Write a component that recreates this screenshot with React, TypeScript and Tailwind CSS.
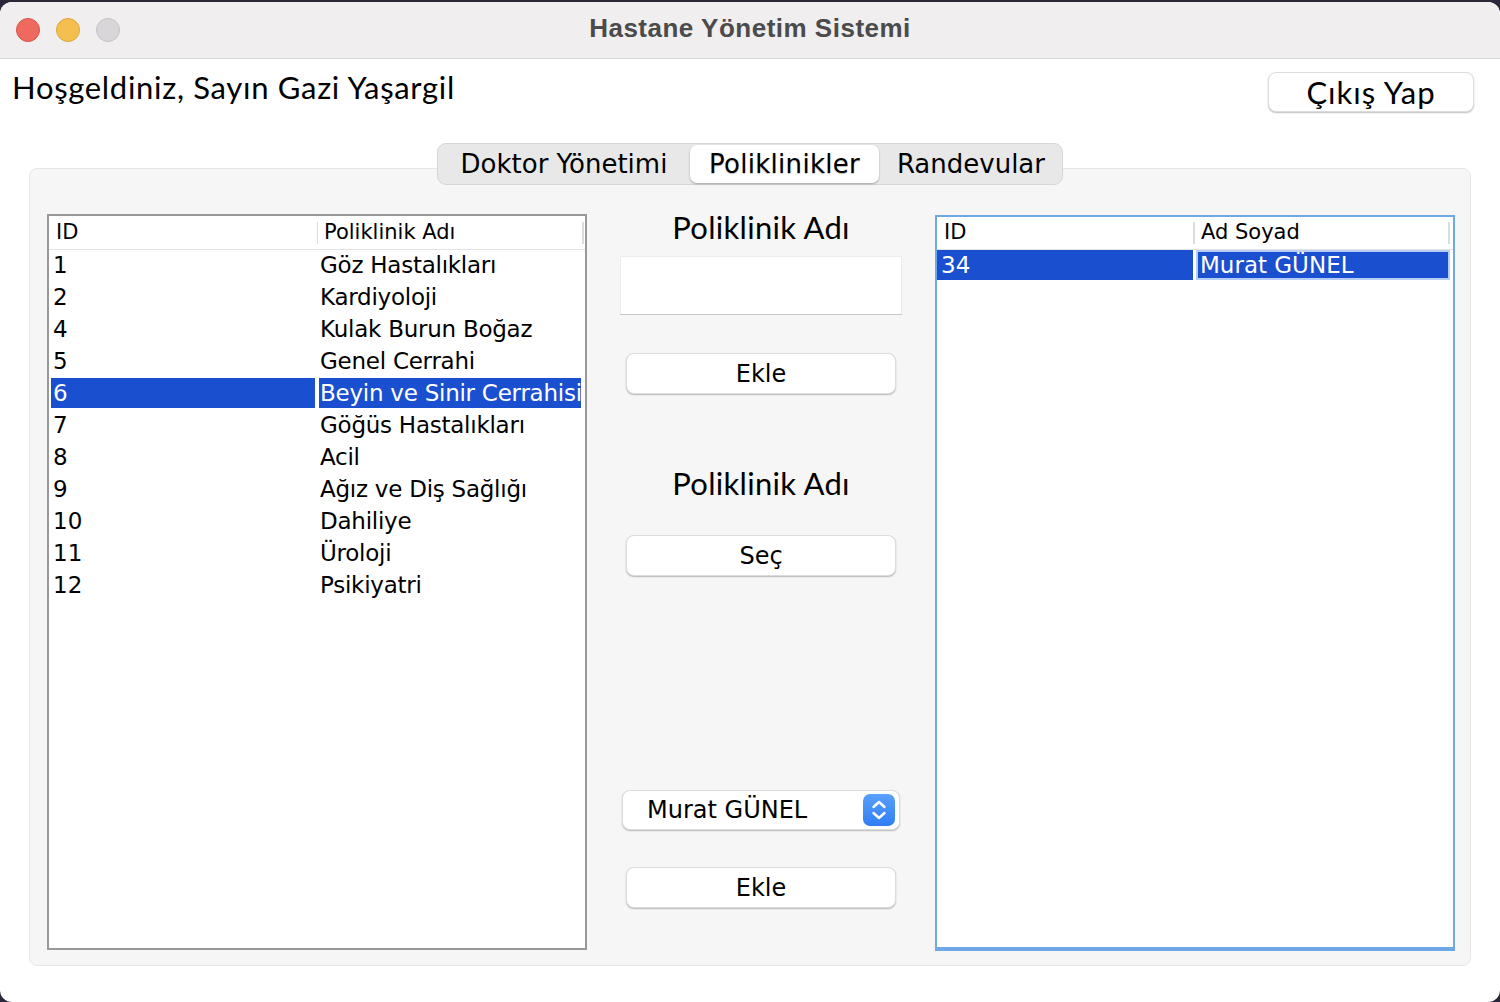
import React from 'react';

const leftRows: [string, string][] = [
  ['1', 'Göz Hastalıkları'],
  ['2', 'Kardiyoloji'],
  ['4', 'Kulak Burun Boğaz'],
  ['5', 'Genel Cerrahi'],
  ['6', 'Beyin ve Sinir Cerrahisi'],
  ['7', 'Göğüs Hastalıkları'],
  ['8', 'Acil'],
  ['9', 'Ağız ve Diş Sağlığı'],
  ['10', 'Dahiliye'],
  ['11', 'Üroloji'],
  ['12', 'Psikiyatri'],
];

const gothic = "font-['Lato','Open_Sans',sans-serif]";
const lucida = "font-['DejaVu_Sans','Noto_Sans',sans-serif]";

function MacButton({ label, className = '' }: { label: string; className?: string }) {
  return (
    <button
      className={`h-[41px] rounded-[8px] bg-white border border-[#dcdcdc] shadow-[0_1px_1.5px_rgba(0,0,0,0.25)] text-[24px] text-black ${lucida} ${className}`}
    >
      {label}
    </button>
  );
}

function Stepper() {
  return (
    <svg width="32" height="32" viewBox="0 0 32 32">
      <defs>
        <linearGradient id="stp" x1="0" y1="0" x2="0" y2="1">
          <stop offset="0" stopColor="#5aa0ff" />
          <stop offset="1" stopColor="#2f7ef2" />
        </linearGradient>
      </defs>
      <rect x="0" y="0" width="32" height="32" rx="7" fill="url(#stp)" />
      <path d="M10.5 13 L16 8 L21.5 13" stroke="#fff" strokeWidth="2.4" fill="none" strokeLinecap="round" strokeLinejoin="round" />
      <path d="M10.5 19 L16 24 L21.5 19" stroke="#fff" strokeWidth="2.4" fill="none" strokeLinecap="round" strokeLinejoin="round" />
    </svg>
  );
}

export default function App() {
  return (
    <div className="w-[1500px] h-[1002px] bg-[#2b2739] pt-[2px]">
      <div className="h-[1000px] bg-white rounded-[12px] overflow-hidden flex flex-col">
        {/* Title bar */}
        <div className="h-[57px] shrink-0 bg-[#f0eeef] border-b border-[#d8d6d8] grid grid-cols-[1fr_auto_1fr] items-center">
          <div className="flex items-center gap-[16px] pl-[16px]">
            <span className="w-[24px] h-[24px] rounded-full bg-[#ee6a5f] border border-[#d9554b]" />
            <span className="w-[24px] h-[24px] rounded-full bg-[#f5bf4f] border border-[#dca53a]" />
            <span className="w-[24px] h-[24px] rounded-full bg-[#d8d6d8] border border-[#c4c2c4]" />
          </div>
          <div className="text-[26px] font-bold text-[#4b4b4b] font-['Liberation_Sans',sans-serif] tracking-[0.5px] mb-[3px]">
            Hastane Yönetim Sistemi
          </div>
          <div />
        </div>

        {/* Header */}
        <div className="flex items-start justify-between pl-[12px] pr-[26px] pt-[10px]">
          <div className={`text-[31px] text-black leading-[36px] tracking-[0.7px] ${gothic}`}>Hoşgeldiniz, Sayın Gazi Yaşargil</div>
          <button
            className={`mt-[3px] w-[206px] h-[40px] rounded-[8px] bg-white border border-[#dcdcdc] shadow-[0_1px_1.5px_rgba(0,0,0,0.25)] text-[31px] leading-[36px] tracking-[1px] text-black ${gothic}`}
          >
            Çıkış Yap
          </button>
        </div>

        {/* Tabs */}
        <div className="flex justify-center mt-[31px] relative z-10 -mb-[17px]">
          <div className={`flex items-center h-[42px] rounded-[9px] bg-[#e8e8e8] border border-[#d6d6d6] px-[2px] text-[26px] text-black ${lucida}`}>
            <div className="w-[250px] text-center pr-[2px]">Doktor Yönetimi</div>
            <div className="w-[189px] h-[38px] rounded-[7px] bg-white shadow-[0_1px_2px_rgba(0,0,0,0.3)] flex items-center justify-center tracking-[0.3px] [text-shadow:0_1px_1px_rgba(0,0,0,0.25)]">
              Poliklinikler
            </div>
            <div className="w-[181px] text-right pr-[15px]">Randevular</div>
          </div>
        </div>

        {/* Tab panel */}
        <div className="mx-[29px] h-[798px] rounded-[8px] bg-[#f6f6f6] border border-[#e6e6e6] pt-[45px] pl-[17px] pr-[15px] flex items-start">
          {/* Left table */}
          <div className={`w-[540px] h-[736px] border-2 border-[#999999] bg-white ${lucida}`}>
            <div className="h-[34px] border-b border-[#e3e3e3] flex items-center text-[21px] text-black">
              <div className="w-[268px] pl-[7px]">ID</div>
              <div className="w-[1px] h-[22px] bg-[#dcdcdc]" />
              <div className="flex-1 pl-[6px]">Poliklinik Adı</div>
              <div className="w-[2px] h-[22px] bg-[#dcdcdc] mr-[1px]" />
            </div>
            {leftRows.map(([id, name]) => {
              const sel = id === '6';
              return (
                <div key={id} className="h-[32px] flex text-[23px] leading-[30px]">
                  <div className={`ml-[2px] w-[264px] h-[30px] pl-[2px] ${sel ? 'bg-[#1a4fcf] text-white' : 'text-black'}`}>{id}</div>
                  <div className={`ml-[4px] w-[262px] h-[30px] pl-[1px] whitespace-nowrap tracking-[-0.25px] ${sel ? 'bg-[#1a4fcf] text-white' : 'text-black'}`}>{name}</div>
                </div>
              );
            })}
          </div>

          {/* Middle column */}
          <div className="w-[282px] ml-[33px] flex flex-col">
            <div className={`-mt-[2px] text-[31px] text-black text-center leading-[30px] tracking-[0.3px] ${gothic}`}>Poliklinik Adı</div>
            <div className="mt-[14px] h-[58px] bg-white border-t border-x border-[#ececec] shadow-[0_1px_0_#c8c8c8]" />
            <MacButton label="Ekle" className="mt-[39px] mx-[6px]" />
            <div className={`mt-[74px] text-[31px] text-black text-center leading-[30px] tracking-[0.3px] ${gothic}`}>Poliklinik Adı</div>
            <MacButton label="Seç" className="mt-[37px] mx-[6px]" />
            <div className={`mt-[214px] mx-[2px] h-[40px] rounded-[8px] bg-white border border-[#dcdcdc] shadow-[0_1px_1.5px_rgba(0,0,0,0.25)] flex items-center justify-between pl-[24px] pr-[4px] text-[24px] text-black ${lucida}`}>
              <span>Murat GÜNEL</span>
              <Stepper />
            </div>
            <MacButton label="Ekle" className="mt-[37px] mx-[6px]" />
          </div>

          {/* Right table */}
          <div className={`mt-[1px] ml-[33px] w-[520px] h-[736px] border-2 border-b-[4px] border-[#6ea8e6] bg-white ${lucida}`}>
            <div className="h-[33px] border-b border-[#e3e3e3] flex items-center text-[21px] text-black">
              <div className="w-[256px] pl-[7px]">ID</div>
              <div className="w-[2px] h-[22px] bg-[#dcdcdc]" />
              <div className="flex-1 pl-[6px]">Ad Soyad</div>
              <div className="w-[2px] h-[22px] bg-[#dcdcdc] mr-[3px]" />
            </div>
            <div className="h-[31px] flex text-[23px] leading-[30px]">
              <div className="w-[256px] h-[30px] pl-[4px] bg-[#1a4fcf] text-white">34</div>
              <div className="ml-[3px] w-[254px] h-[30px] border-2 border-[#b6cef5] bg-[#1a4fcf] text-white leading-[26px] pl-[2px]">
                Murat GÜNEL
              </div>
            </div>
          </div>
        </div>
      </div>
    </div>
  );
}
